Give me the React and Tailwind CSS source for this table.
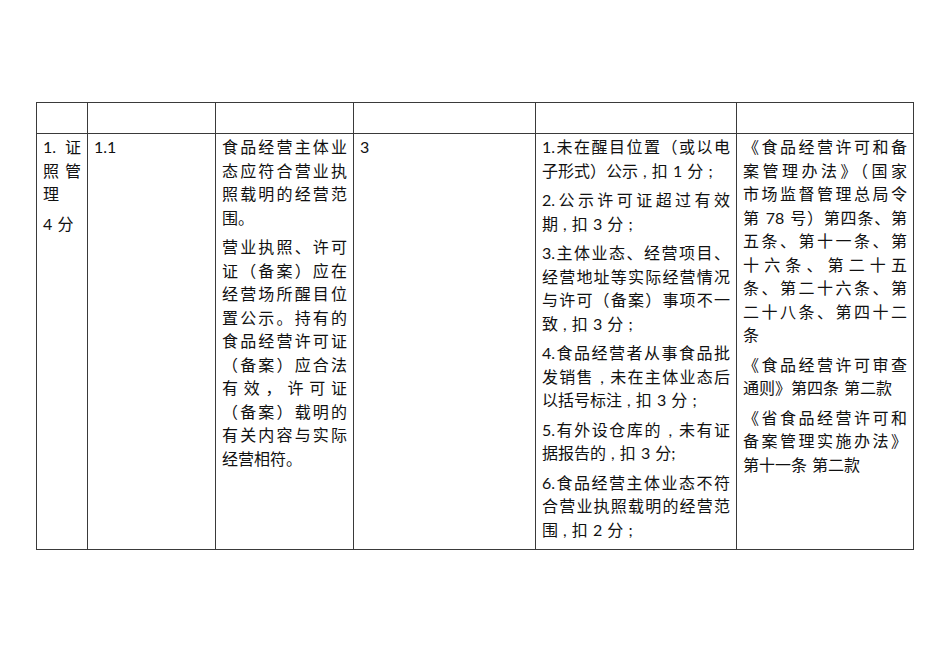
import React from 'react';

// each cell: list of paragraphs, each paragraph a list of lines;
// every line but the last of a paragraph is stretched to the cell width
const CELLS = [
  [['1. 证', '照 管', '理'], ['4 分']],
  [['1.1']],
  [
    ['食品经营主体业', '态应符合营业执', '照载明的经营范', '围。'],
    ['营业执照、许可', '证（备案）应在', '经营场所醒目位', '置公示。持有的', '食品经营许可证', '（备案）应合法', '有效，许可证', '（备案）载明的', '有关内容与实际', '经营相符。'],
  ],
  [['3']],
  [
    ['1.未在醒目位置（或以电', '子形式）公示 , 扣 1 分 ;'],
    ['2.公示许可证超过有效', '期 , 扣 3 分 ;'],
    ['3.主体业态、经营项目、', '经营地址等实际经营情况', '与许可（备案）事项不一', '致 , 扣 3 分 ;'],
    ['4.食品经营者从事食品批', '发销售 , 未在主体业态后', '以括号标注 , 扣 3 分 ;'],
    ['5.有外设仓库的 , 未有证', '据报告的 , 扣 3 分;'],
    ['6.食品经营主体业态不符', '合营业执照载明的经营范', '围 , 扣 2 分 ;'],
  ],
  [
    ['《食品经营许可和备', '案管理办法》（国家', '市场监督管理总局令', '第 78 号）第四条、第', '五条、第十一条、第', '十六条、第二十五', '条、第二十六条、第', '二十八条、第四十二', '条'],
    ['《食品经营许可审查', '通则》第四条 第二款'],
    ['《省食品经营许可和', '备案管理实施办法》', '第十一条 第二款'],
  ],
];

function Cell({ paras }) {
  return (
    <div className="h-[416px] border-r border-b border-[#3a3a3a] px-[6px] pt-[1px] text-[16px] leading-[23.5px] [word-spacing:1px]">
      {paras.map((lines, i) => (
        <div key={i} className={i > 0 ? 'mt-[6px]' : ''}>
          {lines.map((line, j) => (
            <div
              key={j}
              className={`whitespace-nowrap ${j < lines.length - 1 ? 'text-justify [text-align-last:justify]' : 'text-left'}`}
            >
              {line}
            </div>
          ))}
        </div>
      ))}
    </div>
  );
}

export default function App() {
  return (
    <div className="w-[950px] h-[672px] bg-white text-[#111] font-['Lato','Noto_Sans_CJK_SC',sans-serif]">
      <div className="pt-[102px] pl-[36px]">
        <div className="grid w-fit grid-cols-[51px_128px_138px_182px_201px_177px] border-l border-t border-[#3a3a3a]">
          {CELLS.map((_, i) => (
            <div key={'h' + i} className="h-[31px] border-r border-b border-[#3a3a3a]" />
          ))}
          {CELLS.map((paras, i) => (
            <Cell key={i} paras={paras} />
          ))}
        </div>
      </div>
    </div>
  );
}
